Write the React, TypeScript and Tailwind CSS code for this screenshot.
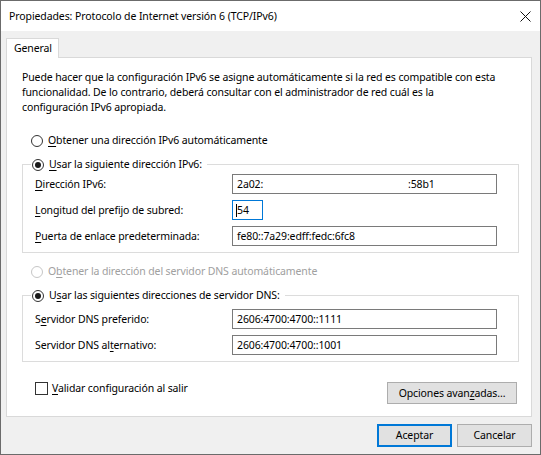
import React from 'react';

// Access-key underline, as Win32 dialogs draw it under one letter
function K({ children }: { children: React.ReactNode }) {
  return <span className="underline underline-offset-[2px] decoration-1">{children}</span>;
}

function Radio({ checked = false, disabled = false }: { checked?: boolean; disabled?: boolean }) {
  return (
    <span
      className={[
        'flex h-[12px] w-[12px] shrink-0 items-center justify-center rounded-full border bg-white',
        disabled ? 'border-[#c6c6c6]' : 'border-[#333333]',
      ].join(' ')}
    >
      {checked && <span className="h-[6px] w-[6px] rounded-full bg-[#1a1a1a]" />}
    </span>
  );
}

function Field({ children, focused = false }: { children?: React.ReactNode; focused?: boolean }) {
  return (
    <div
      className={[
        'flex h-[20px] items-center border bg-white pl-[4px] text-black',
        focused ? 'w-[31px] border-[#0078d7]' : 'w-[265px] border-[#7a7a7a]',
      ].join(' ')}
    >
      {children}
    </div>
  );
}

function Row({ label, children }: { label: React.ReactNode; children: React.ReactNode }) {
  return (
    <div className="grid h-[20px] grid-cols-[197px_265px] items-center">
      <div>{label}</div>
      <div>{children}</div>
    </div>
  );
}

function Button({ children, primary = false, className = '' }: { children: React.ReactNode; primary?: boolean; className?: string }) {
  return (
    <div
      className={[
        'flex items-center justify-center bg-[#e1e1e1] text-black',
        primary ? 'border-2 border-[#0078d7]' : 'border border-[#adadad]',
        className,
      ].join(' ')}
    >
      {children}
    </div>
  );
}

export default function App() {
  return (
    <div className="flex h-[455px] w-[541px] flex-col border border-[#6b6b6b] bg-[#f0f0f0] font-['Noto_Sans',sans-serif] text-[10.5px] leading-[15px] tracking-[-0.12px] text-black">
      {/* Title bar */}
      <div className="flex h-[30px] shrink-0 items-center justify-between bg-white pl-[8px]">
        <span className="tracking-[-0.1px]">Propiedades: Protocolo de Internet versión 6 (TCP/IPv6)</span>
        <div className="flex h-[30px] w-[30px] items-center justify-center">
          <svg width="11" height="11" viewBox="0 0 11 11" fill="none" stroke="#111" strokeWidth="1">
            <path d="M0.5 0.5 L10.5 10.5 M10.5 0.5 L0.5 10.5" />
          </svg>
        </div>
      </div>

      <div className="flex flex-1 flex-col pl-[5px] pr-[8px] pt-[7px]">
        {/* Tab strip */}
        <div className="flex">
          <div className="relative z-10 -mb-px flex h-[20px] w-[53px] items-center border border-b-0 border-[#d9d9d9] bg-white pl-[7px]">
            General
          </div>
        </div>

        {/* Tab page */}
        <div className="flex h-[360px] flex-col border border-[#d9d9d9] bg-white pl-[15px] pr-[12px] pt-[12px]">
          <p className="whitespace-nowrap">
            Puede hacer que la configuración IPv6 se asigne automáticamente si la red es compatible con esta
            <br />
            funcionalidad. De lo contrario, deberá consultar con el administrador de red cuál es la
            <br />
            configuración IPv6 apropiada.
          </p>

          <div className="ml-[9px] mt-[17px] flex h-[17px] items-center gap-[5px]">
            <Radio />
            <span>
              <K>O</K>btener una dirección IPv6 automáticamente
            </span>
          </div>

          <fieldset className="mt-[7px] border border-[#dcdcdc] pb-[6px] pl-[8px] pr-[20px]">
            <legend className="pl-[1px] pr-[5px]">
              <span className="flex h-[17px] items-center gap-[5px]">
                <Radio checked />
                <span>
                  <K>U</K>sar la siguiente dirección IPv6:
                </span>
              </span>
            </legend>
            <div className="flex flex-col gap-[6px] pl-[4px] pt-[1px]">
              <Row
                label={
                  <>
                    <K>D</K>irección IPv6:
                  </>
                }
              >
                <Field>
                  <span className="inline-block w-[171px]">2a02:</span>
                  <span>:58b1</span>
                </Field>
              </Row>
              <Row
                label={
                  <>
                    <K>L</K>ongitud del prefijo de subred:
                  </>
                }
              >
                <Field focused>
                  <span className="relative">
                    <span className="absolute -left-px top-[1px] h-[13px] w-px bg-black" />
                    54
                  </span>
                </Field>
              </Row>
              <Row
                label={
                  <>
                    <K>P</K>uerta de enlace predeterminada:
                  </>
                }
              >
                <Field>fe80::7a29:edff:fedc:6fc8</Field>
              </Row>
            </div>
          </fieldset>

          <div className="ml-[9px] mt-[10px] flex h-[17px] items-center gap-[5px] text-[#a0a0a0]">
            <Radio disabled />
            <span>
              O<K>b</K>tener la dirección del servidor DNS automáticamente
            </span>
          </div>

          <fieldset className="mt-[7px] border border-[#dcdcdc] pb-[6px] pl-[8px] pr-[20px]">
            <legend className="pl-[1px] pr-[5px]">
              <span className="flex h-[17px] items-center gap-[5px]">
                <Radio checked />
                <span>
                  U<K>s</K>ar las siguientes direcciones de servidor DNS:
                </span>
              </span>
            </legend>
            <div className="flex flex-col gap-[6px] pl-[4px] pt-[5px]">
              <Row
                label={
                  <>
                    S<K>e</K>rvidor DNS preferido:
                  </>
                }
              >
                <Field>2606:4700:4700::1111</Field>
              </Row>
              <Row
                label={
                  <>
                    Servidor DNS al<K>t</K>ernativo:
                  </>
                }
              >
                <Field>2606:4700:4700::1001</Field>
              </Row>
            </div>
          </fieldset>

          <div className="mt-[18px] flex items-start justify-between pr-[2px]">
            <div className="ml-[13px] flex h-[17px] items-center gap-[4px]">
              <span className="h-[13px] w-[13px] border border-[#333333] bg-white" />
              <span>
                <K>V</K>alidar configuración al salir
              </span>
            </div>
            <Button className="mt-[2px] h-[22px] w-[130px]">
              <span>
                Opciones avan<K>z</K>adas...
              </span>
            </Button>
          </div>
        </div>

        {/* Dialog buttons */}
        <div className="mt-[7px] flex justify-end gap-[5px]">
          <Button primary className="h-[23px] w-[75px]">
            Aceptar
          </Button>
          <Button className="h-[23px] w-[75px]">Cancelar</Button>
        </div>
      </div>
    </div>
  );
}
